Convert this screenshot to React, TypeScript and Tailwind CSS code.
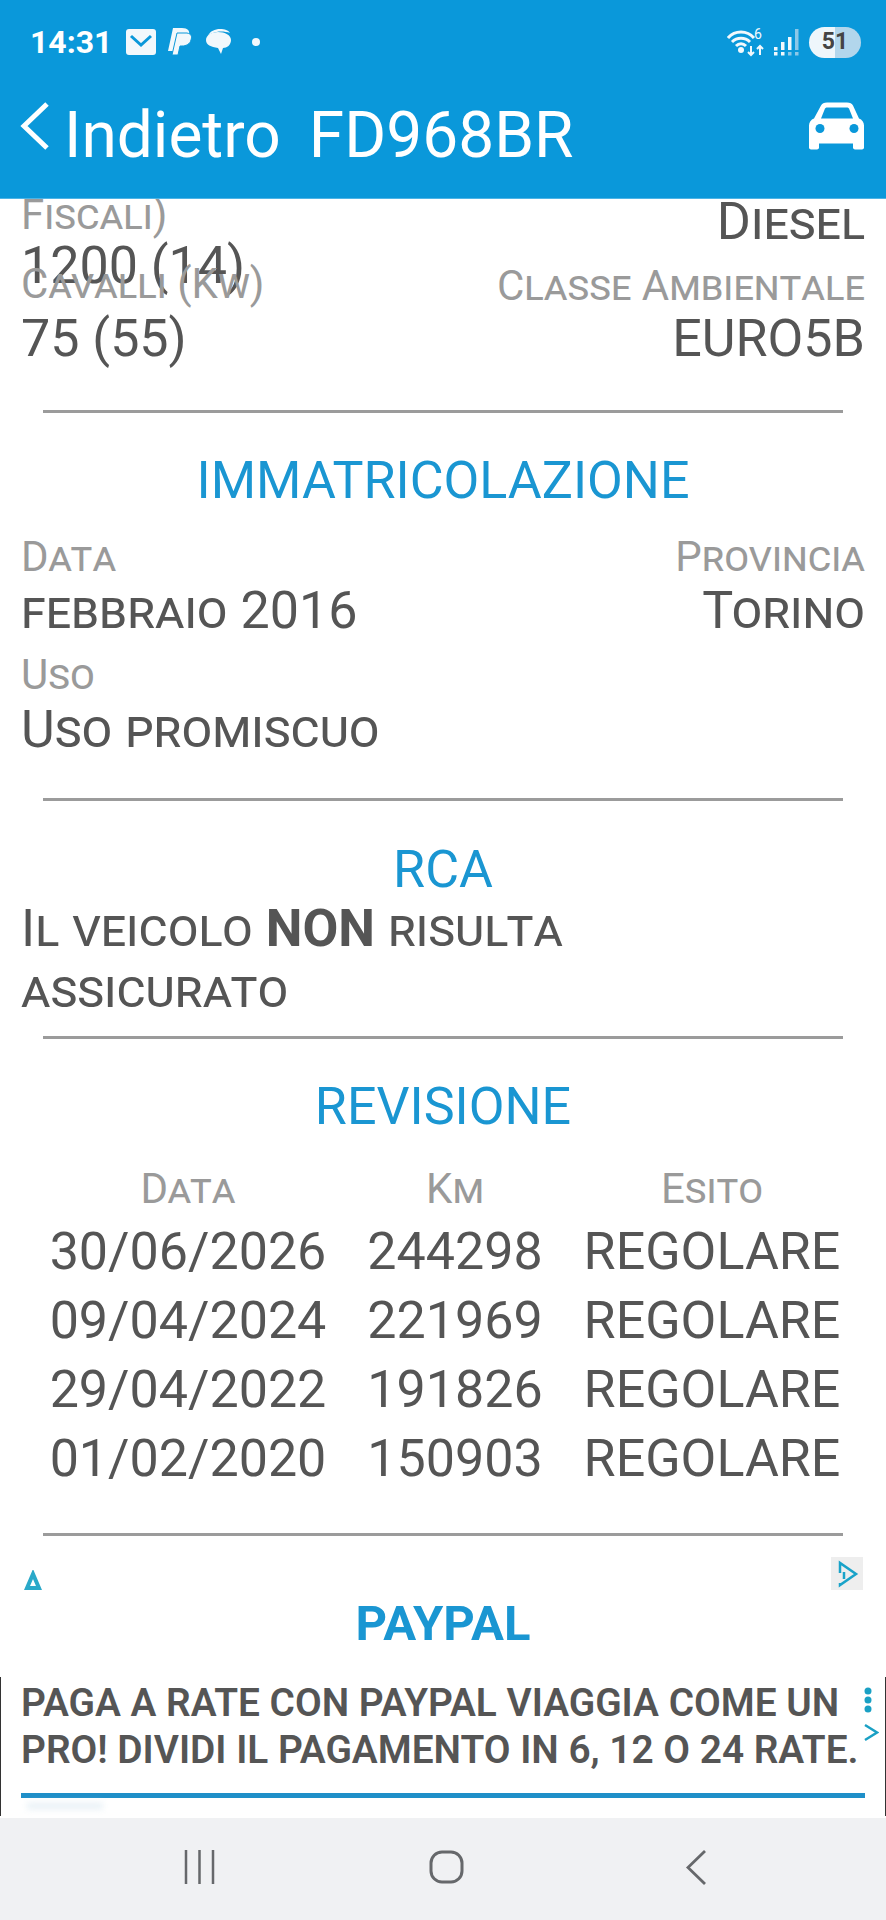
import React from 'react';

const revisions = [
  { date: '30/06/2026', km: '244298', result: 'REGOLARE' },
  { date: '09/04/2024', km: '221969', result: 'REGOLARE' },
  { date: '29/04/2022', km: '191826', result: 'REGOLARE' },
  { date: '01/02/2020', km: '150903', result: 'REGOLARE' },
];

const Label = ({ children, className = '' }: { children: React.ReactNode; className?: string }) => (
  <div className={`text-[42px] leading-[48px] text-[#9a9a9a] [font-variant:small-caps] ${className}`}>{children}</div>
);

const Value = ({ children, className = '' }: { children: React.ReactNode; className?: string }) => (
  <div className={`text-[52px] leading-[60px] text-[#555555] [font-variant:small-caps] ${className}`}>{children}</div>
);

const Title = ({ children }: { children: React.ReactNode }) => (
  <h2 className="text-center text-[52px] leading-[60px] text-[#1a96d2]">{children}</h2>
);

const Divider = () => <div className="mx-[43px] h-[3px] bg-[#9b9b9b]" />;

const StatusBar = () => (
  <div className="flex h-[84px] items-center justify-between pl-[30px] pr-[25px] text-white">
    <div className="flex items-center">
      <span className="text-[32px] font-bold">14:31</span>
      <svg width="31" height="27" viewBox="0 0 31 27" className="ml-[14px]">
        <rect width="30" height="26" rx="3" fill="#f2f8fc" />
        <path d="M5 7l10 9 10-9" fill="none" stroke="#0a98da" strokeWidth="3" />
      </svg>
      <svg width="24" height="30" viewBox="0 0 24 30" className="ml-[11px]">
        <path d="M5 1h9c6 0 8 3 7 7-1 5-5 7-10 7H8l-2 9H0z" fill="#f2f8fc" />
        <path d="M9 6h10c5 1 5 4 4 7-1 4-5 6-9 6h-2l-2 9H4z" fill="#f2f8fc" stroke="#0a98da" strokeWidth="1" />
      </svg>
      <svg width="27" height="30" viewBox="0 0 27 30" className="ml-[13px]">
        <path d="M3 9c2-5 7-7 12-7s8 1 10 4c-5-2-13-2-17 0-3 1-4 2-5 3z" fill="#f2f8fc" />
        <path d="M13 5c7 0 13 3 13 8s-4 8-8 8l-2 6-3-6C6 20 1 18 1 13s6-8 12-8z" fill="#f2f8fc" />
      </svg>
      <span className="ml-[20px] h-[8px] w-[8px] rounded-full bg-[#f2f8fc]" />
    </div>
    <div className="flex items-center">
      <svg width="38" height="30" viewBox="0 0 38 30">
        <path d="M1 11c7-8 19-8 26 0M5 15c5-5 13-5 18 0M9 19c3-3 7-3 10 0" fill="none" stroke="#f2f8fc" strokeWidth="3" />
        <circle cx="14" cy="23" r="3" fill="#f2f8fc" />
        <path d="M24 19v9m-3-3l3 3 3-3M33 28v-9m-3 3l3-3 3 3" fill="none" stroke="#f2f8fc" strokeWidth="2" />
        <text x="27" y="12" fontSize="14" fill="#f2f8fc" fontFamily="Roboto, sans-serif">6</text>
      </svg>
      <svg width="26" height="28" viewBox="0 0 26 28" className="ml-[8px]">
        <rect x="1" y="19" width="3.5" height="3.5" fill="#f2f8fc" />
        <rect x="1" y="24" width="3.5" height="3.5" fill="#f2f8fc" />
        <rect x="8" y="14" width="3.5" height="8" fill="#f2f8fc" />
        <rect x="8" y="24" width="3.5" height="3.5" fill="#f2f8fc" />
        <rect x="15" y="9" width="3.5" height="13" fill="#f2f8fc" />
        <rect x="15" y="24" width="3.5" height="3.5" fill="#8cc8e8" />
        <rect x="22" y="1" width="3.5" height="21" fill="#8cc8e8" />
        <rect x="22" y="24" width="3.5" height="3.5" fill="#8cc8e8" />
      </svg>
      <div className="ml-[10px] flex h-[31px] w-[52px] items-center justify-center rounded-full bg-[linear-gradient(90deg,#eef6fb_0,#eef6fb_50%,#b2d6ec_50%,#b2d6ec_100%)] text-[23px] font-bold text-[#444444]">
        51
      </div>
    </div>
  </div>
);

const CarIcon = () => (
  <svg width="56" height="49" viewBox="0 0 56 48" fill="#ffffff">
    <path d="M12 4c1-2 3-3 6-3h20c3 0 5 1 6 3l6 13c3 1 5 4 5 7v22c0 1-1 2-2 2h-7c-1 0-2-1-2-2v-4H10v4c0 1-1 2-2 2H2c-1 0-2-1-2-2V24c0-3 2-6 5-7zM12 17h32l-4-10c-1-1-1-1-2-1H18c-1 0-1 0-2 1z" fillRule="evenodd" />
    <circle cx="11" cy="27" r="4.5" fill="#0a98da" />
    <circle cx="45" cy="27" r="4.5" fill="#0a98da" />
  </svg>
);

const NavBar = () => (
  <div className="flex h-[102px] items-center gap-[214px] bg-[#f0f1f3] pb-[4px] pl-[184px]">
    <svg width="31" height="34" viewBox="0 0 31 34" stroke="#66686b" strokeWidth="2.5" fill="none">
      <path d="M2 0v34M15.5 0v34M29 0v34" />
    </svg>
    <svg width="35" height="34" viewBox="0 0 35 34" stroke="#66686b" strokeWidth="3" fill="none">
      <rect x="2" y="2" width="31" height="30" rx="11" />
    </svg>
    <svg width="22" height="35" viewBox="0 0 22 35" stroke="#66686b" strokeWidth="2.8" fill="none" className="ml-[7px]">
      <path d="M20 1L3 17.5 20 34" />
    </svg>
  </div>
);

const App = () => {
  return (
    <div className="flex h-[1920px] w-[886px] flex-col overflow-hidden bg-white font-['Roboto',sans-serif]">
      <header className="h-[199px] shrink-0 border-b border-[#4db4e6] bg-[#0a98da]">
        <StatusBar />
        <div className="flex items-center justify-between pl-[20px] pr-[21px] pt-[16px]">
          <div className="flex items-center text-white">
            <svg width="30" height="48" viewBox="0 0 30 48" fill="none" stroke="#ffffff" strokeWidth="5" className="-mt-[20px]">
              <path d="M27 2L4 24l23 22" />
            </svg>
            <span className="ml-[14px] text-[64px] leading-[72px]">Indietro</span>
            <span className="ml-[28px] text-[64px] leading-[72px]">FD968BR</span>
          </div>
          <div className="-mt-[22px]">
            <CarIcon />
          </div>
        </div>
      </header>

      <main className="flex-1 overflow-hidden">
        <div className="flex justify-between px-[21px]">
          <div>
            <Label className="-mt-[8px]">Fiscali)</Label>
            <Value className="-mt-[3px]">1200 (14)</Value>
            <Label className="-mt-[36px]">Cavalli (Kw)</Label>
            <Value className="mt-[1px]">75 (55)</Value>
          </div>
          <div className="text-right">
            <Value className="-mt-[7px]">Diesel</Value>
            <Label className="mt-[10px]">Classe Ambientale</Label>
            <Value className="-mt-[1px]">EURO5B</Value>
          </div>
        </div>

        <div className="mt-[41px]">
          <Divider />
        </div>

        <div className="mt-[38px]">
          <Title>IMMATRICOLAZIONE</Title>
        </div>
        <div className="mt-[22px] flex justify-between px-[21px]">
          <div>
            <Label>Data</Label>
            <Value>febbraio 2016</Value>
            <Label className="mt-[10px]">Uso</Label>
            <Value className="mt-[1px]">Uso promiscuo</Value>
          </div>
          <div className="text-right">
            <Label>Provincia</Label>
            <Value>Torino</Value>
          </div>
        </div>

        <div className="mt-[38px]">
          <Divider />
        </div>

        <div className="mt-[39px]">
          <Title>RCA</Title>
        </div>
        <div className="-mt-[2px] px-[21px]">
          <Value className="leading-[61px]">
            Il veicolo <span className="font-bold">NON</span> risulta
            <br />
            assicurato
          </Value>
        </div>

        <div className="mt-[16px]">
          <Divider />
        </div>

        <div className="mt-[38px]">
          <Title>REVISIONE</Title>
        </div>

        <div className="mt-[28px] grid grid-cols-[326px_208px_1fr] pl-[25px] pr-[21px] text-center">
          <Label>Data</Label>
          <Label>Km</Label>
          <Label>Esito</Label>
          {revisions.map((row) => (
            <React.Fragment key={row.date}>
              <div className="mt-[9px] text-[52px] leading-[60px] text-[#555555]">{row.date}</div>
              <div className="mt-[9px] text-[52px] leading-[60px] text-[#555555]">{row.km}</div>
              <div className="mt-[9px] text-[52px] leading-[60px] text-[#555555]">{row.result}</div>
            </React.Fragment>
          ))}
        </div>

        <div className="mt-[44px]">
          <Divider />
        </div>

        {/* ad banner */}
        <div className="relative h-[284px]">
          <svg width="18" height="20" viewBox="0 0 18 20" fill="none" stroke="#2aa9c9" strokeWidth="4" className="absolute left-[24px] top-[34px]">
            <path d="M9 4L3 18h12z" />
          </svg>
          <div className="absolute right-[23px] top-[21px] flex h-[33px] w-[32px] items-center justify-center bg-[#eeeeee]">
            <svg width="24" height="28" viewBox="0 0 24 28" fill="none" stroke="#19a3c9" strokeWidth="2.5">
              <path d="M5 13V3l16 11L5 25v-2M9 12v7" />
            </svg>
          </div>
          <div className="pt-[60px] text-center text-[49px] font-bold leading-[56px] text-[#1a96d2]">PAYPAL</div>
          <div className="mt-[25px] h-[139px] border-x border-[#333333]">
            <div className="relative mx-[20px] border-b-[5px] border-[#1f8fc8] pb-[20px] pt-[2px]">
              <p className="whitespace-nowrap text-[38.8px] font-semibold leading-[47px] text-[#555555]">
                PAGA A RATE CON PAYPAL VIAGGIA COME UN
                <br />
                PRO! DIVIDI IL PAGAMENTO IN 6, 12 O 24 RATE.
              </p>
              <div className="absolute left-[6px] top-[calc(100%+10px)] h-[6px] w-[76px] bg-[#e6eff5] blur-[3px]" />
            </div>
          </div>
          <svg width="10" height="26" viewBox="0 0 10 26" fill="#1aa0c4" className="absolute right-[13px] top-[151px]">
            <circle cx="5" cy="4" r="3.5" />
            <circle cx="5" cy="13" r="3.5" />
            <circle cx="5" cy="22" r="3.5" />
          </svg>
          <svg width="16" height="19" viewBox="0 0 16 19" fill="none" stroke="#1aa0c4" strokeWidth="2.5" className="absolute right-[7px] top-[187px]">
            <path d="M2 2l12 7.5L2 17" />
          </svg>
        </div>
      </main>

      <NavBar />
    </div>
  );
};

export default App;
